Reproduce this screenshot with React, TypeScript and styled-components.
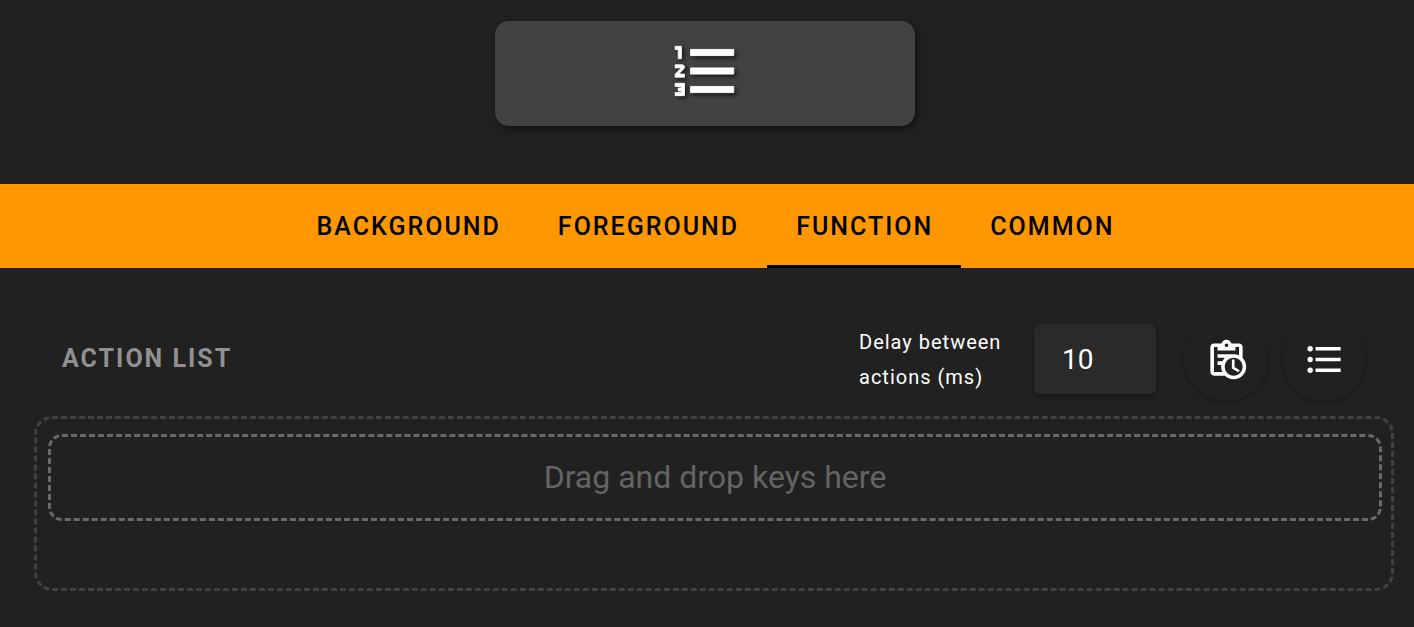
import React, { useState } from "react";
import styled, { createGlobalStyle } from "styled-components";

const GlobalStyle = createGlobalStyle`
  *, *::before, *::after { box-sizing: border-box; }
  body {
    margin: 0;
    background: #212121;
    color: #fff;
    font-family: Roboto, "Liberation Sans", sans-serif;
  }
`;

const Preview = styled.header`
  display: flex;
  justify-content: center;
  padding: 21px 4px 58px 0;
`;

const KeyCard = styled.div`
  display: flex;
  justify-content: center;
  width: 420px;
  max-width: 100%;
  padding: 13px 0 18px 1px;
  border-radius: 14px;
  background: #424242;
  box-shadow: 2px 3px 7px rgba(0, 0, 0, 0.5);
`;

const KeyIcon = styled.svg`
  display: block;
  width: 74px;
  height: 74px;
  fill: #fff;
  stroke: #fff;
  stroke-width: 0.3;
  filter: drop-shadow(2px 2px 2px rgba(0, 0, 0, 0.7));
`;

const TabBar = styled.nav`
  display: flex;
  justify-content: center;
  padding-left: 16px;
  background: #ff9800;
`;

const Tab = styled.button<{ $active: boolean }>`
  height: 84px;
  padding: 5px 28px 0 29px;
  border: 0;
  border-bottom: 3px solid ${(p) => (p.$active ? "#000" : "transparent")};
  background: none;
  color: #000;
  font: 500 25px/36px Roboto, "Liberation Sans", sans-serif;
  letter-spacing: 2px;
  text-transform: uppercase;
  cursor: pointer;
`;

const Panel = styled.main`
  padding: 49px 20px 36px 34px;
`;

const Toolbar = styled.div`
  display: flex;
  align-items: center;
  padding: 0 28px;
`;

const Title = styled.h2`
  flex: 1;
  margin: 0;
  color: #909090;
  font-size: 25px;
  font-weight: 700;
  line-height: 36px;
  letter-spacing: 2px;
  text-transform: uppercase;
`;

const DelayLabel = styled.label`
  width: 175px;
  padding-top: 2px;
  font-size: 20px;
  line-height: 35px;
  letter-spacing: 1px;
`;

const DelayInput = styled.input`
  width: 122px;
  height: 70px;
  margin-right: 28px;
  padding: 0 28px;
  border: 0;
  border-radius: 7px;
  outline: 0;
  background: #2a2a2a;
  color: #fff;
  font: 400 28px/35px Roboto, "Liberation Sans", sans-serif;
  box-shadow: 0 3px 5px rgba(0, 0, 0, 0.3);
`;

const ButtonGroup = styled.div`
  display: flex;
  gap: 14px;
`;

const RoundButton = styled.button`
  display: flex;
  align-items: center;
  justify-content: center;
  width: 84px;
  height: 84px;
  padding: 0;
  border: 0;
  border-radius: 50%;
  background: #212121;
  color: #fff;
  box-shadow: 0 2px 4px rgba(0, 0, 0, 0.25);
  cursor: pointer;

  svg {
    width: 43px;
    height: 43px;
    fill: currentColor;
  }
`;

const ActionList = styled.section`
  margin-top: 15px;
  padding: 15px 9px 67px 11px;
  border: 3px dashed #424242;
  border-radius: 18px;
`;

const DropZone = styled.div`
  padding: 19px 0 20px;
  border: 3px dashed #696969;
  border-radius: 14px;
  color: #646464;
  font-size: 32px;
  line-height: 42px;
  text-align: center;
`;

const tabs = ["Background", "Foreground", "Function", "Common"];

export default function App() {
  const [active, setActive] = useState("Function");
  const [delay, setDelay] = useState("10");

  return (
    <>
      <GlobalStyle />
      <Preview>
        <KeyCard>
          <KeyIcon viewBox="0 0 24 24" aria-hidden="true">
            <path d="M7,13V11H21V13H7M7,19V17H21V19H7M7,7V5H21V7H7M3,8V5H2V4H4V8H3M2,17V16H5V20H2V19H4V18.5H3V17.5H4V17H2M4.25,10A0.75,0.75 0 0,1 5,10.75C5,10.95 4.92,11.14 4.79,11.27L3.12,13H5V14H2V13.08L4,11H2V10H4.25Z" />
          </KeyIcon>
        </KeyCard>
      </Preview>
      <TabBar role="tablist">
        {tabs.map((name) => (
          <Tab
            key={name}
            type="button"
            role="tab"
            aria-selected={name === active}
            $active={name === active}
            onClick={() => setActive(name)}
          >
            {name}
          </Tab>
        ))}
      </TabBar>
      <Panel>
        <Toolbar>
          <Title>Action list</Title>
          <DelayLabel htmlFor="delay">
            Delay between
            <br />
            actions (ms)
          </DelayLabel>
          <DelayInput
            id="delay"
            type="text"
            inputMode="numeric"
            value={delay}
            onChange={(e) => setDelay(e.target.value)}
          />
          <ButtonGroup>
            <RoundButton type="button" aria-label="Insert delays">
              <svg viewBox="0 0 24 24" aria-hidden="true">
                <path d="M21 11.11V5C21 3.9 20.11 3 19 3H14.82C14.4 1.84 13.3 1 12 1S9.6 1.84 9.18 3H5C3.9 3 3 3.9 3 5V19C3 20.11 3.9 21 5 21H11.11C12.37 22.24 14.09 23 16 23C19.87 23 23 19.87 23 16C23 14.09 22.24 12.37 21 11.11M12 3C12.55 3 13 3.45 13 4S12.55 5 12 5 11 4.55 11 4 11.45 3 12 3M5 19V5H7V7H17V5H19V9.68C18.09 9.25 17.08 9 16 9H7V11H11.1C10.5 11.57 10.04 12.25 9.68 13H7V15H9.08C9.03 15.33 9 15.66 9 16C9 17.08 9.25 18.09 9.68 19H5M16 21C13.24 21 11 18.76 11 16S13.24 11 16 11 21 13.24 21 16 18.76 21 16 21M16.5 16.25L19.36 17.94L18.61 19.16L15 17V12H16.5V16.25Z" />
              </svg>
            </RoundButton>
            <RoundButton type="button" aria-label="Show list">
              <svg viewBox="0 0 24 24" aria-hidden="true">
                <path d="M7,5H21V7H7V5M7,13V11H21V13H7M4,4.5A1.5,1.5 0 0,1 5.5,6A1.5,1.5 0 0,1 4,7.5A1.5,1.5 0 0,1 2.5,6A1.5,1.5 0 0,1 4,4.5M4,10.5A1.5,1.5 0 0,1 5.5,12A1.5,1.5 0 0,1 4,13.5A1.5,1.5 0 0,1 2.5,12A1.5,1.5 0 0,1 4,10.5M7,19V17H21V19H7M4,16.5A1.5,1.5 0 0,1 5.5,18A1.5,1.5 0 0,1 4,19.5A1.5,1.5 0 0,1 2.5,18A1.5,1.5 0 0,1 4,16.5Z" />
              </svg>
            </RoundButton>
          </ButtonGroup>
        </Toolbar>
        <ActionList>
          <DropZone>Drag and drop keys here</DropZone>
        </ActionList>
      </Panel>
    </>
  );
}
